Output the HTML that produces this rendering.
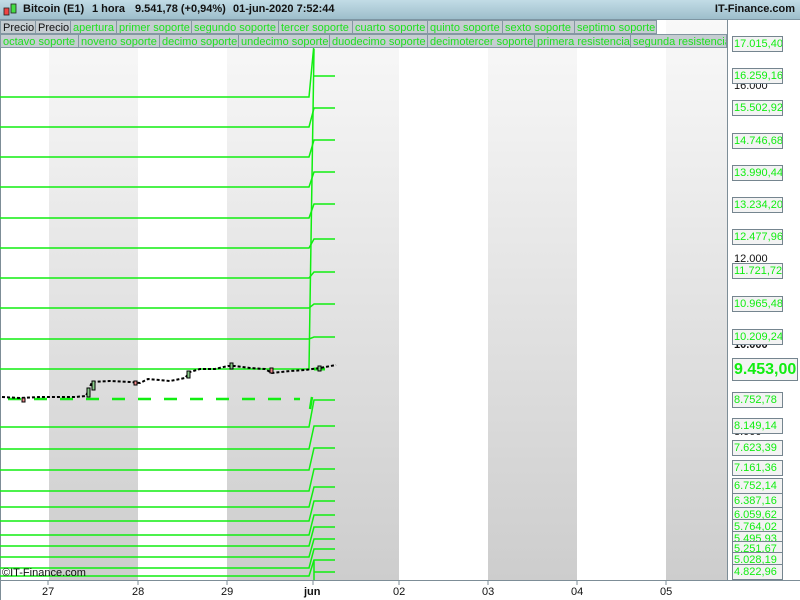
<!DOCTYPE html>
<html><head><meta charset="utf-8"><style>
body{margin:0;width:800px;height:600px;overflow:hidden;background:#fff;font-family:"Liberation Sans",sans-serif;position:relative}
.t{position:absolute;left:0;top:0;width:800px;height:19px;background:linear-gradient(#c2dce6,#9dbecb);border-bottom:1px solid #7d95a2}
.t b{position:absolute;top:3px;font-size:11px;font-weight:bold;color:#111;white-space:nowrap}
.lg{position:absolute;height:14px;font-size:11px;line-height:14px;color:#1fe01f;background:#c5cdd1;border:1px solid #8497a2;box-sizing:border-box;padding-left:2px;white-space:nowrap;overflow:hidden}
.lb{position:absolute;left:732px;width:51px;height:16px;font-size:11px;line-height:15px;color:#11ee11;background:#f3f3f3;border:1px solid #75858f;box-sizing:border-box;padding-left:1px;white-space:nowrap;overflow:hidden}
.ax{position:absolute;font-size:11px;color:#111}
</style></head><body>
<svg width="800" height="600" style="position:absolute;left:0;top:0">
<defs><linearGradient id="g" x1="0" y1="0" x2="0" y2="1"><stop offset="0" stop-color="#f9f9f9"/><stop offset="1" stop-color="#cdcdcd"/></linearGradient></defs>
<rect x="49" y="19" width="89" height="561" fill="url(#g)"/>
<rect x="227" y="19" width="172" height="561" fill="url(#g)"/>
<rect x="488" y="19" width="89" height="561" fill="url(#g)"/>
<rect x="666" y="19" width="61" height="561" fill="url(#g)"/>
<line x1="727.5" y1="19" x2="727.5" y2="580" stroke="#7d8d97"/>
<line x1="0" y1="580.5" x2="800" y2="580.5" stroke="#7d8d97"/>
<line x1="0.5" y1="19" x2="0.5" y2="600" stroke="#7d8d97"/>
<g stroke="#7d8d97"><line x1="48" y1="580" x2="48" y2="585"/><line x1="138" y1="580" x2="138" y2="585"/><line x1="227" y1="580" x2="227" y2="585"/><line x1="313" y1="580" x2="313" y2="585"/><line x1="399" y1="580" x2="399" y2="585"/><line x1="488" y1="580" x2="488" y2="585"/><line x1="577" y1="580" x2="577" y2="585"/><line x1="666" y1="580" x2="666" y2="585"/></g>
<g fill="none" stroke="#11ee11" stroke-width="1.5">
<polyline points="0,97 309,97 314,44 335,44"/>
<polyline points="314,76 335,76"/>
<polyline points="0,127 309,127 314,108 335,108"/>
<polyline points="0,157 309,157 314,140 335,140"/>
<polyline points="0,187 309,187 314,172 335,172"/>
<polyline points="0,218 309,218 314,204 335,204"/>
<polyline points="0,248 309,248 314,239 335,239"/>
<polyline points="0,278 309,278 314,272 335,272"/>
<polyline points="0,308 309,308 314,304 335,304"/>
<polyline points="0,339 309,339 314,337 335,337"/>
<polyline points="0,369 309,369 314,49"/>
<polyline points="314,369 325,369" stroke-width="3"/>
<polyline points="0,427 309,427 314,400 335,400"/>
<polyline points="0,449 309,449 314,426 335,426"/>
<polyline points="0,470 309,470 314,448 335,448"/>
<polyline points="0,491 309,491 314,469 335,469"/>
<polyline points="0,507 309,507 314,487 335,487"/>
<polyline points="0,521 309,521 314,501 335,501"/>
<polyline points="0,535 309,535 314,515 335,515"/>
<polyline points="0,546 309,546 314,527 335,527"/>
<polyline points="0,557 309,557 314,539 335,539"/>
<polyline points="0,568 309,568 314,549 335,549"/>
<polyline points="0,576 309,576 314,560 335,560"/>
<polyline points="314,572 335,572"/>
<line x1="314" y1="580" x2="314" y2="560"/>
<line x1="8" y1="399" x2="300" y2="399" stroke-dasharray="13,13" stroke-width="2.5"/>
<line x1="310" y1="409" x2="312" y2="397" stroke-width="2.5"/>
</g>
<g stroke="#000" stroke-width="2" fill="none" stroke-dasharray="3,2">
<polyline points="2,397 20,398 40,397 60,397 75,397 86,396 92,382 110,381 130,382 140,383 148,379 170,381 185,378 190,372 200,369 215,369 228,366 235,366 250,368 265,369 272,373 290,371 305,370 320,368 336,365"/>
</g>
<g fill="#8c8" stroke="#000" stroke-width="1">
<rect x="87" y="388" width="3" height="9"/><rect x="92" y="381" width="3" height="9"/><rect x="187" y="371" width="3" height="7"/><rect x="230" y="363" width="3" height="6"/><rect x="318" y="366" width="3" height="5"/>
</g>
<g fill="#e88" stroke="#000" stroke-width="1"><rect x="22" y="398" width="3" height="4"/><rect x="134" y="381" width="3" height="4"/><rect x="270" y="368" width="3" height="5"/></g>
</svg>
<div class="t"><svg style="position:absolute;left:3px;top:2px" width="14" height="15"><rect x="1" y="6" width="5" height="7" fill="#e44" stroke="#222" stroke-width="0.8"/><rect x="8" y="2" width="5" height="9" fill="#4d4" stroke="#222" stroke-width="0.8"/></svg>
<b style="left:23px">Bitcoin (E1)</b><b style="left:92px">1 hora</b><b style="left:135px">9.541,78 (+0,94%)</b><b style="left:233px">01-jun-2020 7:52:44</b>
<b style="right:5px">IT-Finance.com</b></div>
<div class="lg" style="left:0;top:20px;width:36px;color:#111">Precio</div>
<div class="lg" style="left:35px;top:20px;width:36px;color:#111">Precio</div>
<div class="lg" style="left:70px;top:20px;width:47px">apertura</div>
<div class="lg" style="left:116px;top:20px;width:76px">primer soporte</div>
<div class="lg" style="left:191px;top:20px;width:88px">segundo soporte</div>
<div class="lg" style="left:278px;top:20px;width:75px">tercer soporte</div>
<div class="lg" style="left:352px;top:20px;width:76px">cuarto soporte</div>
<div class="lg" style="left:427px;top:20px;width:76px">quinto soporte</div>
<div class="lg" style="left:502px;top:20px;width:73px">sexto soporte</div>
<div class="lg" style="left:574px;top:20px;width:83px">septimo soporte</div>
<div class="lg" style="left:0;top:34px;width:79px">octavo soporte</div>
<div class="lg" style="left:78px;top:34px;width:82px">noveno soporte</div>
<div class="lg" style="left:159px;top:34px;width:80px">decimo soporte</div>
<div class="lg" style="left:238px;top:34px;width:92px">undecimo soporte</div>
<div class="lg" style="left:329px;top:34px;width:99px">duodecimo soporte</div>
<div class="lg" style="left:427px;top:34px;width:108px">decimotercer soporte</div>
<div class="lg" style="left:534px;top:34px;width:97px">primera resistencia</div>
<div class="lg" style="left:630px;top:34px;width:97px">segunda resistencia</div>
<div class="ax" style="left:734px;top:80px">16.000</div>
<div class="ax" style="left:734px;top:253px">12.000</div>
<div class="ax" style="left:734px;top:339px;font-weight:bold">10.000</div>
<div class="ax" style="left:734px;top:426px">8.000</div>
<div class="lb" style="top:36px">17.015,40</div>
<div class="lb" style="top:68px">16.259,16</div>
<div class="lb" style="top:100px">15.502,92</div>
<div class="lb" style="top:133px">14.746,68</div>
<div class="lb" style="top:165px">13.990,44</div>
<div class="lb" style="top:197px">13.234,20</div>
<div class="lb" style="top:229px">12.477,96</div>
<div class="lb" style="top:263px">11.721,72</div>
<div class="lb" style="top:296px">10.965,48</div>
<div class="lb" style="top:329px">10.209,24</div>
<div class="lb" style="top:358px;width:66px;height:23px;font-size:16px;line-height:21px;font-weight:bold;padding-left:1px">9.453,00</div>
<div class="lb" style="top:392px">8.752,78</div>
<div class="lb" style="top:418px">8.149,14</div>
<div class="lb" style="top:440px">7.623,39</div>
<div class="lb" style="top:460px">7.161,36</div>
<div class="lb" style="top:478px">6.752,14</div>
<div class="lb" style="top:493px">6.387,16</div>
<div class="lb" style="top:507px">6.059,62</div>
<div class="lb" style="top:519px">5.764,02</div>
<div class="lb" style="top:531px">5.495,93</div>
<div class="lb" style="top:541px">5.251,67</div>
<div class="lb" style="top:552px">5.028,19</div>
<div class="lb" style="top:564px">4.822,96</div>
<div class="ax" style="left:2px;top:567px">©IT-Finance.com</div>
<div class="ax" style="left:42px;top:586px">27</div>
<div class="ax" style="left:132px;top:586px">28</div>
<div class="ax" style="left:221px;top:586px">29</div>
<div class="ax" style="left:304px;top:586px;font-weight:bold">jun</div>
<div class="ax" style="left:393px;top:586px">02</div>
<div class="ax" style="left:482px;top:586px">03</div>
<div class="ax" style="left:571px;top:586px">04</div>
<div class="ax" style="left:660px;top:586px">05</div>
</body></html>
